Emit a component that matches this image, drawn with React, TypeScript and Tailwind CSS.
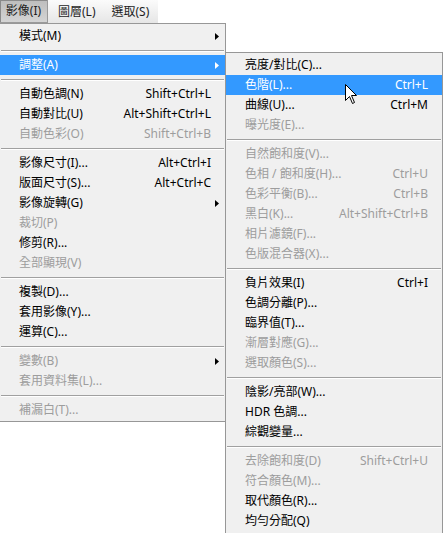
import React from 'react';

type Item =
  | { sep: true }
  | { label: string; shortcut?: string; disabled?: boolean; sub?: boolean; active?: boolean; sep?: false };

const mainItems: Item[] = [
  { label: '模式(M)', sub: true },
  { sep: true },
  { label: '調整(A)', sub: true, active: true },
  { sep: true },
  { label: '自動色調(N)', shortcut: 'Shift+Ctrl+L' },
  { label: '自動對比(U)', shortcut: 'Alt+Shift+Ctrl+L' },
  { label: '自動色彩(O)', shortcut: 'Shift+Ctrl+B', disabled: true },
  { sep: true },
  { label: '影像尺寸(I)...', shortcut: 'Alt+Ctrl+I' },
  { label: '版面尺寸(S)...', shortcut: 'Alt+Ctrl+C' },
  { label: '影像旋轉(G)', sub: true },
  { label: '裁切(P)', disabled: true },
  { label: '修剪(R)...' },
  { label: '全部顯現(V)', disabled: true },
  { sep: true },
  { label: '複製(D)...' },
  { label: '套用影像(Y)...' },
  { label: '運算(C)...' },
  { sep: true },
  { label: '變數(B)', sub: true, disabled: true },
  { label: '套用資料集(L)...', disabled: true },
  { sep: true },
  { label: '補漏白(T)...', disabled: true },
];

const subItems: Item[] = [
  { label: '亮度/對比(C)...' },
  { label: '色階(L)...', shortcut: 'Ctrl+L', active: true },
  { label: '曲線(U)...', shortcut: 'Ctrl+M' },
  { label: '曝光度(E)...', disabled: true },
  { sep: true },
  { label: '自然飽和度(V)...', disabled: true },
  { label: '色相 / 飽和度(H)...', shortcut: 'Ctrl+U', disabled: true },
  { label: '色彩平衡(B)...', shortcut: 'Ctrl+B', disabled: true },
  { label: '黑白(K)...', shortcut: 'Alt+Shift+Ctrl+B', disabled: true },
  { label: '相片濾鏡(F)...', disabled: true },
  { label: '色版混合器(X)...', disabled: true },
  { sep: true },
  { label: '負片效果(I)', shortcut: 'Ctrl+I' },
  { label: '色調分離(P)...' },
  { label: '臨界值(T)...' },
  { label: '漸層對應(G)...', disabled: true },
  { label: '選取顏色(S)...', disabled: true },
  { sep: true },
  { label: '陰影/亮部(W)...' },
  { label: 'HDR 色調...' },
  { label: '綜觀變量...' },
  { sep: true },
  { label: '去除飽和度(D)', shortcut: 'Shift+Ctrl+U', disabled: true },
  { label: '符合顏色(M)...', disabled: true },
  { label: '取代顏色(R)...' },
  { label: '均勻分配(Q)' },
];

const Arrow = ({ white }: { white?: boolean }) => (
  <svg width="4" height="7" viewBox="0 0 4 7" className="shrink-0">
    <path d="M0 0 L4 3.5 L0 7 Z" fill={white ? '#ffffff' : '#000000'} />
  </svg>
);

const MenuList = ({ items }: { items: Item[] }) => (
  <div className="flex flex-col">
    {items.map((it, i) => {
      if (it.sep) {
        return (
          <div key={i} className="h-[9px] flex items-center px-[1px]">
            <div className="w-full h-[2px] border-t border-[#a0a0a0] border-b border-b-white" />
          </div>
        );
      }
      const color = it.active ? 'text-white' : it.disabled ? 'text-[#9d9d9d]' : 'text-black';
      return (
        <div
          key={i}
          className={`h-[20px] leading-[20px] flex items-center justify-between pl-[19px] ${
            it.sub ? 'pr-[6px]' : 'pr-[14px]'
          } ${it.active ? 'bg-[#3399ff]' : ''} ${color}`}
        >
          <span className="whitespace-nowrap">{it.label}</span>
          {it.shortcut && <span className="whitespace-nowrap">{it.shortcut}</span>}
          {it.sub && <Arrow white={it.active} />}
        </div>
      );
    })}
  </div>
);

export default function App() {
  return (
    <div className="relative w-[446px] h-[533px] bg-white overflow-hidden text-[12px] font-['Noto_Sans','Noto_Sans_CJK_TC',sans-serif]">
      {/* menu bar */}
      <div className="flex items-stretch w-[158px] h-[23px] bg-gradient-to-b from-[#fbfbfb] to-[#e6e6e6] text-[#1e1e1e]">
        <div className="w-[48px] flex items-center justify-center bg-gradient-to-b from-[#bdbdbd] to-[#d4d4d4] border-r border-b border-[#9a9a9a] shadow-[inset_1px_1px_0_#8a8a8a]">
          影像(I)
        </div>
        <div className="flex items-center pl-[10px]">圖層(L)</div>
        <div className="flex items-center pl-[16px]">選取(S)</div>
      </div>

      {/* main menu */}
      <div className="w-[226px] bg-[#f0f0f0] border-t border-r border-b border-[#979797] pt-[2px] pb-[1px]">
        <MenuList items={mainItems} />
      </div>

      {/* adjustments submenu */}
      <div className="absolute left-[225px] top-[52px] w-[218px] bg-[#f0f0f0] border border-[#979797] pt-[2px] pb-[2px]">
        <MenuList items={subItems} />
      </div>

      {/* mouse pointer */}
      <svg className="absolute left-[345px] top-[84px]" width="13" height="21" viewBox="0 0 13 21">
        <path
          d="M0.5 0.5 L0.5 16.5 L4.5 12.5 L7.5 19.5 L9.5 18.5 L6.5 11.5 L11.5 11.5 Z"
          fill="#ffffff"
          stroke="#000000"
          strokeWidth="1"
          strokeLinejoin="miter"
        />
      </svg>
    </div>
  );
}
